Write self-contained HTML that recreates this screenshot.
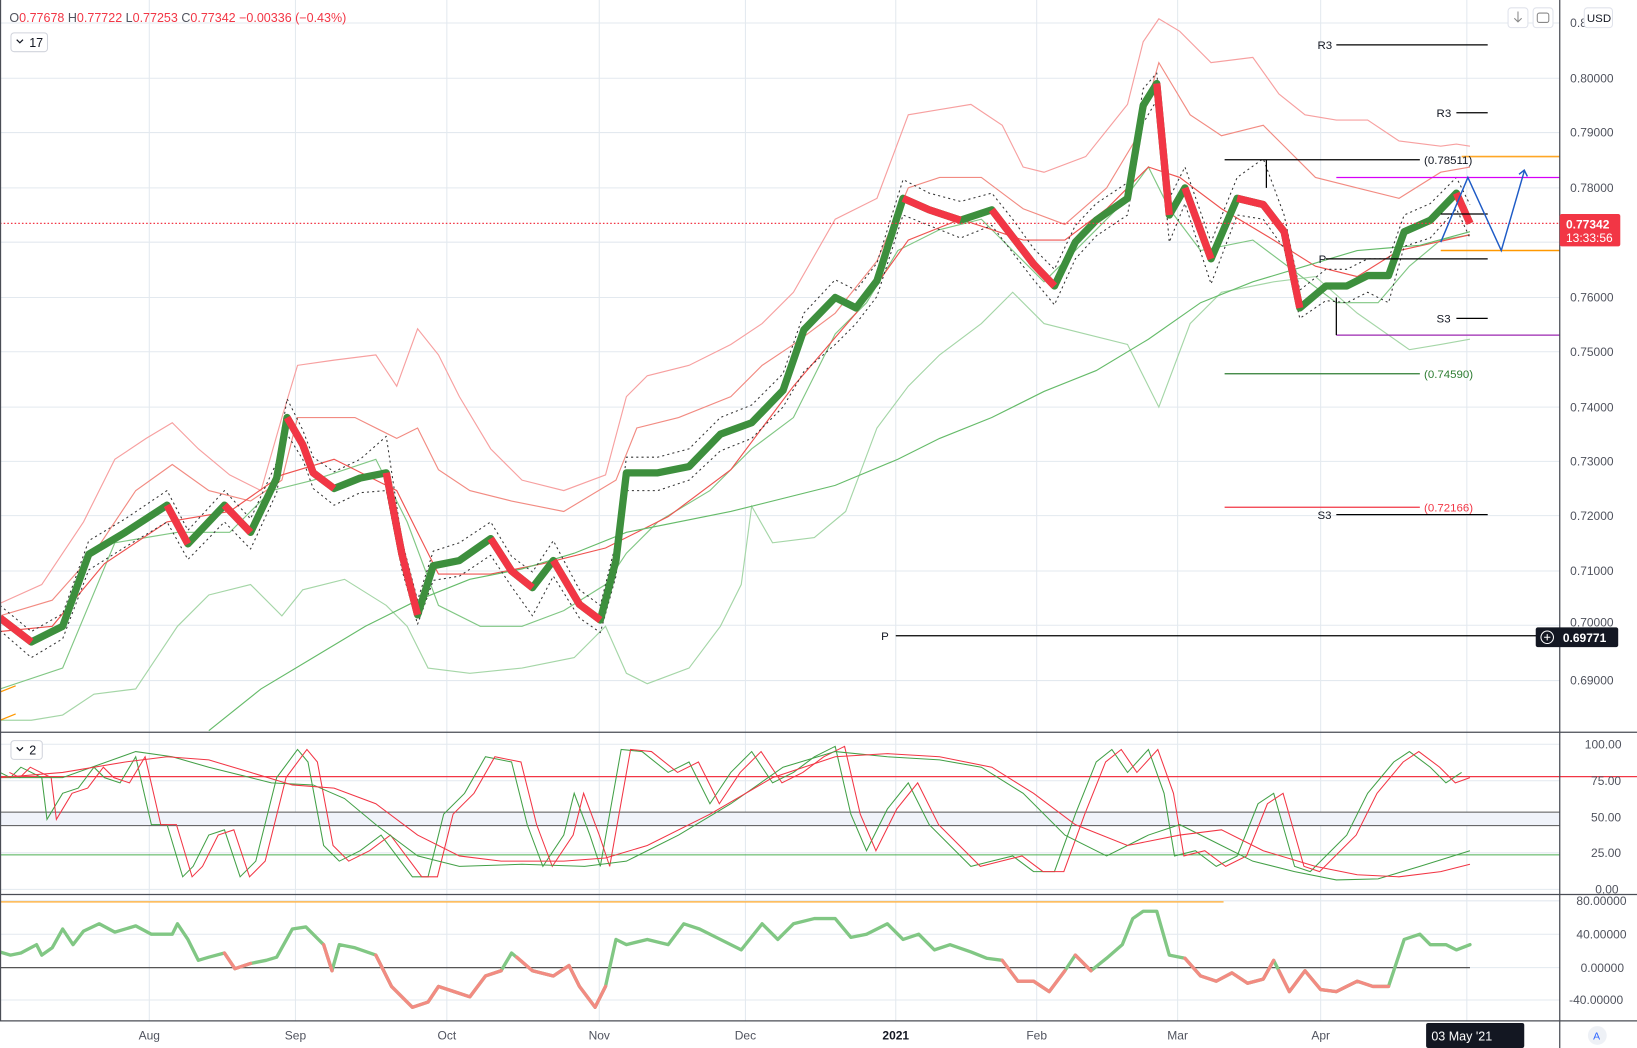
<!DOCTYPE html>
<html><head><meta charset="utf-8"><style>
html,body{margin:0;padding:0;background:#fff;overflow:hidden}
svg{display:block;font-family:"Liberation Sans",sans-serif}
</style></head><body>
<svg width="1637" height="1048" viewBox="0 0 1568 1004" preserveAspectRatio="none" xmlns="http://www.w3.org/2000/svg">
<rect width="1568" height="1004" fill="#fff"/>
<g stroke="#e3e9ef" stroke-width="1">
<path d="M143 0V978M283 0V978M428 0V978M574 0V978M714 0V978M858 0V978M993 0V978M1128 0V978M1265 0V978M1405 0V978"/>
<path d="M0 22H1494M0 75H1494M0 127H1494M0 180H1494M0 232H1494M0 285H1494M0 337H1494M0 390H1494M0 442H1494M0 494H1494M0 547H1494M0 599H1494M0 652H1494"/>
<path d="M0 713H1494M0 748H1494M0 783H1494M0 817H1494M0 852H1494M0 863H1494M0 895H1494M0 927H1494M0 958H1494"/>
</g>
<!-- bands -->
<g fill="none" stroke-width="1.1">
<polyline stroke="#f7a0a0" points="0,578 40,560 80,500 110,440 140,420 165,405 190,430 220,455 250,470 270,400 285,350 320,345 360,340 380,370 400,315 420,340 440,380 470,430 500,460 540,470 580,455 600,380 620,360 660,350 700,330 730,310 760,280 800,210 840,190 870,110 900,105 930,100 960,120 980,160 1000,165 1040,150 1080,100 1095,40 1110,18 1130,30 1160,60 1200,55 1225,90 1250,110 1280,115 1310,115 1340,135 1380,140 1395,138 1408,140"/>
<polyline stroke="#f28b82" points="0,590 50,575 90,530 130,470 165,445 200,470 240,480 270,460 285,400 340,400 380,420 400,410 420,450 450,470 490,480 540,490 590,460 610,410 650,400 700,380 730,350 760,330 800,300 840,250 870,180 900,170 940,170 980,200 1020,215 1060,180 1090,130 1110,60 1140,110 1170,130 1210,120 1230,140 1260,170 1300,180 1340,190 1380,165 1408,160"/>
<polyline stroke="#a5d6a7" points="0,690 30,690 60,685 90,665 130,660 170,600 200,570 240,560 270,590 290,565 330,555 370,580 390,600 410,640 450,645 500,640 550,630 580,600 600,645 620,655 660,640 690,600 710,560 720,485 740,520 780,515 810,490 840,410 870,370 900,340 940,310 970,280 1000,310 1040,320 1080,330 1100,370 1110,390 1140,310 1170,280 1220,270 1260,265 1300,300 1350,335 1380,330 1408,325"/>
<polyline stroke="#81c784" points="0,660 60,640 110,520 170,510 220,510 260,470 300,460 360,440 390,500 420,580 460,600 500,600 540,585 580,560 600,530 630,500 680,470 720,430 760,400 800,320 830,290 860,240 900,220 940,210 970,240 1000,270 1040,230 1070,200 1100,160 1120,200 1150,240 1200,230 1240,260 1280,290 1320,290 1350,255 1380,230 1408,225"/>
<polyline stroke="#ef5350" points="0,605 50,600 100,540 160,500 220,490 270,455 320,440 380,470 420,550 470,550 520,540 580,525 640,495 700,450 760,370 820,300 870,230 920,210 980,230 1020,230 1060,200 1100,160 1130,170 1170,200 1220,230 1260,255 1300,265 1340,240 1408,225"/>
<polyline stroke="#66bb6a" points="200,700 250,660 300,630 350,600 400,575 450,555 500,545 550,530 600,510 700,490 800,465 860,440 900,420 950,400 1000,375 1050,355 1100,325 1150,290 1200,270 1250,255 1300,240 1360,235 1408,222"/>
</g>
<!-- price -->
<g fill="none" stroke-linejoin="round">
<polyline stroke="#333" stroke-width="1" stroke-dasharray="2,3" points="0,580 30,605 60,588 85,518 120,497 160,470 180,508 215,470 240,497 265,443 275,382 290,412 300,438 320,452 345,440 370,418 385,518 400,575 415,528 440,520 470,500 490,533 510,548 530,518 555,565 575,580 590,520 600,438 630,438 660,430 690,400 720,388 750,358 770,300 800,268 820,278 840,252 865,172 890,185 920,193 950,185 970,210 990,238 1010,258 1030,216 1050,195 1080,175 1095,85 1108,70 1120,190 1135,160 1160,232 1185,170 1210,152 1230,206 1245,278 1270,258 1290,258 1310,248 1330,248 1345,206 1370,195 1395,170 1408,196"/>
<polyline stroke="#333" stroke-width="1" stroke-dasharray="2,3" points="0,604 30,630 60,612 85,546 120,524 160,500 180,536 215,500 240,526 265,472 275,416 290,440 300,468 320,484 345,472 370,470 385,546 400,598 415,556 440,552 470,532 490,562 510,590 530,552 555,592 575,606 590,552 600,470 630,470 660,460 690,432 720,420 750,390 770,356 800,330 820,310 840,284 865,206 890,216 920,228 950,216 970,242 990,268 1010,292 1030,248 1050,226 1080,206 1095,118 1108,96 1120,232 1135,195 1160,272 1185,206 1210,210 1230,238 1245,305 1270,288 1290,290 1310,280 1330,290 1345,236 1370,228 1395,200 1408,228"/>
<polyline stroke="#3d8f3d" stroke-width="7" points="0,592 30,615 60,600 85,531 120,510 160,484 180,521 215,484 240,510 265,458 275,400 290,426 300,453 320,468 345,458 370,453 385,531 400,589 415,542 440,537 470,516 490,547 510,563 530,537 555,579 575,594 590,537 600,453 630,453 660,447 690,416 720,405 750,374 770,316 800,285 820,295 840,269 865,190 890,201 920,211 950,201 970,227 990,253 1010,274 1030,232 1050,211 1080,190 1095,101 1108,80 1120,206 1135,180 1160,248 1185,190 1210,196 1230,222 1245,295 1270,274 1290,274 1310,264 1330,264 1345,222 1370,211 1395,185 1408,214"/>
<g stroke="#f23645" stroke-width="7">
<polyline points="0,592 30,615"/><polyline points="160,484 180,521"/><polyline points="215,484 240,510"/>
<polyline points="275,400 290,426 300,453 320,468"/><polyline points="370,453 385,531 400,589"/>
<polyline points="470,516 490,547 510,563"/><polyline points="530,537 555,579 575,594"/>
<polyline points="865,190 890,201 920,211"/><polyline points="950,201 970,227 990,253 1010,274"/>
<polyline points="1108,80 1120,206"/><polyline points="1135,180 1160,248"/>
<polyline points="1185,190 1210,196 1230,222 1245,295"/><polyline points="1395,185 1408,214"/>
</g>
</g>
<!-- annotations -->
<g stroke-width="1.2">
<line x1="0" y1="214" x2="1494" y2="214" stroke="#f23645" stroke-dasharray="1.5,2"/>
<line x1="1280" y1="43" x2="1425" y2="43" stroke="#000"/>
<line x1="1395" y1="108" x2="1425" y2="108" stroke="#000"/>
<line x1="1173" y1="153" x2="1360" y2="153" stroke="#000"/>
<line x1="1213" y1="153" x2="1213" y2="180" stroke="#000"/>
<line x1="1400" y1="150" x2="1494" y2="150" stroke="#ffa726" stroke-width="1.5"/>
<line x1="1280" y1="170" x2="1494" y2="170" stroke="#d500f9"/>
<line x1="1380" y1="240" x2="1494" y2="240" stroke="#ff9800" stroke-width="1.5"/>
<line x1="1270" y1="248" x2="1425" y2="248" stroke="#000"/>
<line x1="1395" y1="305" x2="1425" y2="305" stroke="#000"/>
<line x1="1280" y1="321" x2="1494" y2="321" stroke="#9c27b0"/>
<line x1="1280" y1="285" x2="1280" y2="321" stroke="#000"/>
<line x1="1173" y1="358" x2="1360" y2="358" stroke="#2e7d32"/>
<line x1="1173" y1="486" x2="1360" y2="486" stroke="#f23645"/>
<line x1="1280" y1="493" x2="1425" y2="493" stroke="#000"/>
<line x1="858" y1="609" x2="1473" y2="609" stroke="#000"/>
<line x1="1380" y1="205" x2="1425" y2="205" stroke="#000"/>
<polyline points="1380,232 1406,170 1438,240 1460,164" fill="none" stroke="#1e5bc6" stroke-width="1.4"/>
<polyline points="1455,167 1460,163 1463,169" fill="none" stroke="#1e5bc6" stroke-width="1.4"/>
<line x1="0" y1="663" x2="15" y2="657" stroke="#ff9800"/>
<line x1="0" y1="690" x2="15" y2="684" stroke="#ff9800"/>
</g>
<g font-size="11" fill="#131722">
<text x="1262" y="47">R3</text><text x="1376" y="112">R3</text>
<text x="1364" y="157">(0.78511)</text>
<text x="1263" y="252">P</text><text x="1376" y="309">S3</text>
<text x="1364" y="362" fill="#2e7d32">(0.74590)</text>
<text x="1364" y="490" fill="#f23645">(0.72166)</text>
<text x="1262" y="497">S3</text><text x="844" y="613">P</text>
</g>
<!-- stochastic -->
<rect x="0" y="778" width="1494" height="13" fill="#f0f3fa"/>
<g fill="none" stroke-width="1">
<line x1="0" y1="744" x2="1568" y2="744" stroke="#f23645" stroke-width="1.2"/>
<line x1="0" y1="778" x2="1494" y2="778" stroke="#555"/>
<line x1="0" y1="791" x2="1494" y2="791" stroke="#555"/>
<line x1="0" y1="819" x2="1494" y2="819" stroke="#4caf50"/>
<polyline id="fk" stroke="#43a047" points="0,740 10,745 20,735 40,745 45,785 60,760 75,755 90,735 100,745 115,750 130,725 145,790 160,790 175,840 185,830 200,800 215,795 230,840 245,825 265,745 285,718 295,730 310,810 325,825 345,815 365,800 380,820 395,840 410,840 425,780 445,760 465,725 490,730 505,790 520,830 540,800 550,760 565,800 575,830 595,718 615,720 640,740 660,730 680,770 700,740 720,720 740,750 760,740 780,725 800,715 815,780 830,815 850,775 870,750 890,790 910,810 930,830 950,825 970,820 990,835 1010,835 1030,780 1050,730 1065,718 1080,740 1100,718 1115,760 1125,820 1145,815 1165,830 1185,820 1205,770 1220,760 1240,830 1255,835 1275,815 1290,800 1310,760 1335,730 1350,720 1370,735 1385,750 1400,740"/>
<polyline stroke="#f23645" transform="translate(9,0)" points="0,740 10,745 20,735 40,745 45,785 60,760 75,755 90,735 100,745 115,750 130,725 145,790 160,790 175,840 185,830 200,800 215,795 230,840 245,825 265,745 285,718 295,730 310,810 325,825 345,815 365,800 380,820 395,840 410,840 425,780 445,760 465,725 490,730 505,790 520,830 540,800 550,760 565,800 575,830 595,718 615,720 640,740 660,730 680,770 700,740 720,720 740,750 760,740 780,725 800,715 815,780 830,815 850,775 870,750 890,790 910,810 930,830 950,825 970,820 990,835 1010,835 1030,780 1050,730 1065,718 1080,740 1100,718 1115,760 1125,820 1145,815 1165,830 1185,820 1205,770 1220,760 1240,830 1255,835 1275,815 1290,800 1310,760 1335,730 1350,720 1370,735 1385,750 1399,745"/>
<polyline stroke="#43a047" points="0,745 60,745 130,720 165,725 200,735 240,745 260,750 300,752 330,765 360,790 400,820 440,830 500,828 560,830 600,825 650,800 700,770 750,735 800,720 850,725 900,728 940,735 980,760 1020,800 1060,820 1100,800 1130,790 1160,805 1200,825 1240,835 1280,843 1320,842 1360,830 1408,815"/>
<polyline stroke="#f23645" points="0,745 60,740 120,730 160,725 200,728 240,740 280,752 320,755 360,770 400,800 440,820 480,825 540,825 580,822 620,810 680,780 740,745 800,725 850,722 900,725 950,735 990,760 1030,790 1080,810 1130,800 1170,795 1210,815 1260,830 1300,838 1340,840 1380,835 1408,828"/>
</g>
<!-- momentum -->
<line x1="0" y1="864" x2="1172" y2="864" stroke="#ffb74d" stroke-width="1.5"/>
<line x1="0" y1="927" x2="1408" y2="927" stroke="#555" stroke-width="1.2"/>
<g fill="none" stroke-width="3.2" stroke-linejoin="round" stroke-linecap="round">
<polyline stroke="#81c784" points="0,912 10,915 20,913 35,905 40,915 50,908 60,890 70,905 80,892 95,885 110,893 130,887 145,895 165,895 170,885 180,900 190,920 200,917 215,913 225,928 240,923 255,920 265,917 280,890 293,888 310,905 318,930 325,905 340,908 360,915 375,945 395,965 410,960 420,945 435,950 450,955 465,935 480,930 490,913 510,930 530,935 545,925 555,945 570,965 580,945 590,900 600,905 620,900 640,905 655,885 670,890 690,900 710,910 730,885 745,900 760,885 780,880 800,880 815,898 830,895 850,885 865,900 880,895 895,910 910,905 930,912 945,918 960,920 975,940 990,940 1005,950 1020,930 1030,915 1045,930 1060,918 1075,905 1085,880 1095,873 1108,873 1120,915 1135,918 1150,935 1165,940 1180,932 1195,942 1210,938 1220,920 1235,950 1250,930 1265,948 1280,950 1290,945 1300,940 1315,945 1330,945 1345,900 1360,895 1370,905 1385,905 1395,910 1408,905"/>
<g stroke="#f28b82">
<polyline points="215,913 225,928 240,923"/><polyline points="310,905 318,930"/>
<polyline points="360,915 375,945 395,965 410,960 420,945 435,950 450,955 465,935 480,930"/>
<polyline points="495,917 510,930 530,935 545,925 555,945 570,965 580,945"/>
<polyline points="960,920 975,940 990,940 1005,950 1020,930"/>
<polyline points="1030,915 1045,930"/>
<polyline points="1135,918 1150,935 1165,940 1180,932 1195,942 1210,938 1220,920"/>
<polyline points="1225,930 1235,950 1250,930 1265,948 1280,950 1290,945 1300,940 1315,945 1330,945"/>
</g>
</g>
<!-- pane separators & axis -->
<g stroke="#4a4d55" stroke-width="1.2">
<line x1="0" y1="701.5" x2="1568" y2="701.5"/>
<line x1="0" y1="857" x2="1568" y2="857"/>
<line x1="0" y1="978" x2="1568" y2="978"/>
<line x1="1494" y1="0" x2="1494" y2="1004"/>
<line x1="0.5" y1="0" x2="0.5" y2="978"/>
</g>
<g font-size="11.5" fill="#50535e">
<text x="1504" y="26">0.8</text>
<text x="1504" y="79">0.80000</text><text x="1504" y="131">0.79000</text><text x="1504" y="184">0.78000</text>
<text x="1504" y="289">0.76000</text><text x="1504" y="341">0.75000</text><text x="1504" y="394">0.74000</text>
<text x="1504" y="446">0.73000</text><text x="1504" y="498">0.72000</text><text x="1504" y="551">0.71000</text>
<text x="1504" y="600">0.70000</text><text x="1504" y="656">0.69000</text>
<text x="1518" y="717">100.00</text><text x="1524" y="752">75.00</text><text x="1524" y="787">50.00</text><text x="1524" y="821">25.00</text><text x="1528" y="856">0.00</text>
<text x="1510" y="867">80.00000</text><text x="1510" y="899">40.00000</text><text x="1514" y="931">0.00000</text><text x="1503" y="962">-40.00000</text>
<g text-anchor="middle"><text x="143" y="996">Aug</text><text x="283" y="996">Sep</text><text x="428" y="996">Oct</text><text x="574" y="996">Nov</text><text x="714" y="996">Dec</text><text x="858" y="996" font-weight="bold" fill="#131722">2021</text><text x="993" y="996">Feb</text><text x="1128" y="996">Mar</text><text x="1265" y="996">Apr</text></g>
</g>
<!-- price labels -->
<rect x="1494" y="205" width="58" height="31" rx="2" fill="#f23645"/>
<text x="1500" y="219" font-size="11.5" font-weight="bold" fill="#fff">0.77342</text>
<text x="1500" y="232" font-size="11.5" fill="#fff">13:33:56</text>
<rect x="1471" y="601" width="79" height="19" rx="2" fill="#131722"/>
<circle cx="1482" cy="610.5" r="6" fill="none" stroke="#fff" stroke-width="1"/>
<path d="M1479 610.5h6M1482 607.5v6" stroke="#fff" stroke-width="1"/>
<text x="1497" y="615" font-size="11.5" font-weight="bold" fill="#fff">0.69771</text>
<!-- legend -->
<text x="9" y="21" font-size="12" fill="#f23645"><tspan fill="#50535e">O</tspan>0.77678 <tspan fill="#50535e">H</tspan>0.77722 <tspan fill="#50535e">L</tspan>0.77253 <tspan fill="#50535e">C</tspan>0.77342 −0.00336 (−0.43%)</text>
<rect x="10.5" y="31.5" width="35" height="18" rx="3" fill="#fff" stroke="#d1d4dc"/>
<path d="M16 38l3 3 3-3" fill="none" stroke="#131722" stroke-width="1.2"/><text x="28" y="45" font-size="12" fill="#131722">17</text>
<rect x="10.5" y="709.5" width="30" height="18" rx="3" fill="#fff" stroke="#d1d4dc"/>
<path d="M16 716l3 3 3-3" fill="none" stroke="#131722" stroke-width="1.2"/><text x="28" y="723" font-size="12" fill="#131722">2</text>
<rect x="1444.5" y="7.5" width="19" height="19" rx="3" fill="#fff" stroke="#e0e3eb"/>
<path d="M1454 11v10M1450.5 17.5l3.5 3.5 3.5-3.5" fill="none" stroke="#888" stroke-width="1"/>
<rect x="1468.5" y="7.5" width="19" height="19" rx="3" fill="#fff" stroke="#e0e3eb"/>
<rect x="1472.5" y="12.5" width="11" height="9" rx="2" fill="none" stroke="#888"/>
<rect x="1517.5" y="7.5" width="27" height="19" rx="3" fill="#fff" stroke="#e0e3eb"/>
<text x="1520" y="21" font-size="11" fill="#131722">USD</text>
<rect x="1366" y="980" width="94" height="24" rx="2" fill="#131722"/>
<text x="1371" y="997" font-size="12" fill="#fff">03 May '21</text>
<circle cx="1530" cy="992" r="9" fill="#eef1f6"/>
<text x="1526" y="996" font-size="10" fill="#2962ff">A</text>
</svg>
</body></html>
